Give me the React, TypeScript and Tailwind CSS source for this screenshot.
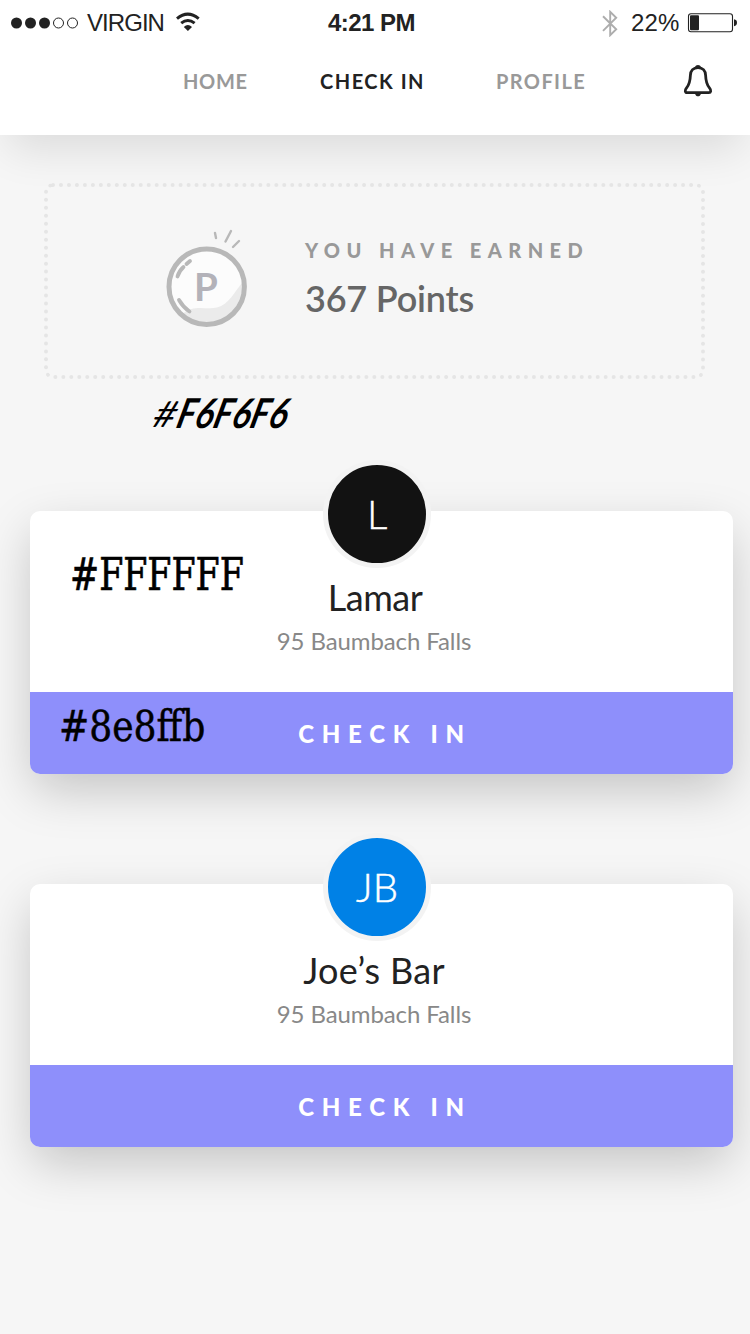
import React from "react";

function StatusBar() {
  return (
    <div className="flex h-[46px] items-center justify-between pl-[11px] pr-[13px] font-['Liberation_Sans',Arial,sans-serif] text-[#222]">
      <div className="flex w-[260px] items-center">
        <svg width="68" height="12" viewBox="0 0 68 12" className="mr-2" fill="#222">
          <circle cx="5.5" cy="6" r="5.5" />
          <circle cx="19.5" cy="6" r="5.5" />
          <circle cx="33.5" cy="6" r="5.5" />
          <g fill="none" stroke="#222" strokeWidth="1">
            <circle cx="47.5" cy="6" r="5" />
            <circle cx="61.5" cy="6" r="5" />
          </g>
        </svg>
        <span className="w-[89px] whitespace-nowrap text-[24px] leading-[46px] tracking-[-0.95px]">VIRGIN</span>
        <svg width="24" height="20" viewBox="0 0 24 20" className="-mt-[3px]" fill="none" stroke="#222" strokeWidth="3">
          <path d="M1 6.6Q11.7 -2.4 22.7 6.6" />
          <path d="M5.2 11.2Q11.8 5.7 18.6 11.2" />
          <path d="M7.8 15Q11.8 11.2 16 15L11.9 19Z" fill="#222" stroke="none" />
        </svg>
      </div>
      <span className="mr-[5px] whitespace-nowrap text-[24px] font-bold leading-[46px] tracking-[-0.5px]">4:21 PM</span>
      <div className="flex w-[260px] items-center justify-end">
        <svg width="16" height="27" viewBox="0 0 16 27" className="mr-[13px]" fill="none" stroke="#adadad" strokeWidth="1.9">
          <path d="M1 6.3L14.2 19.3L8.2 25.2V1.8L14.2 7.7L1 20.8" />
        </svg>
        <span className="w-[56px] whitespace-nowrap text-[24px] leading-[46px] tracking-[0.1px]">22%</span>
        <svg width="50" height="20" viewBox="0 0 50 20" className="-mt-[1px]">
          <rect x="1.5" y="0.7" width="44" height="18" rx="2.5" fill="none" stroke="#222" strokeWidth="1.1" />
          <rect x="3" y="2.2" width="9" height="15" rx="1" fill="#222" />
          <path d="M47 6.3Q50 6.8 50 9.7T47 13.2Z" fill="#222" />
        </svg>
      </div>
    </div>
  );
}

function Nav() {
  return (
    <nav className="flex h-[70px] items-center pl-[183px] text-[20px] font-bold text-[#999]">
      <span className="w-[137px] whitespace-nowrap tracking-[0.7px]">HOME</span>
      <span className="w-[176px] whitespace-nowrap tracking-[1.5px] text-[#222]">CHECK IN</span>
      <span className="w-[187px] whitespace-nowrap tracking-[1.4px]">PROFILE</span>
      <svg width="30" height="34" viewBox="0 0 30 34" fill="none" stroke="#222" strokeWidth="2.8" strokeLinejoin="round">
        <path d="M15 3.6C10.2 3.6 7.6 6.8 7.4 11.2C7.2 17 6.2 20.8 3.4 24.2C1.6 26.3 2 28.6 4.2 28.6H25.8C28 28.6 28.4 26.3 26.6 24.2C23.8 20.8 22.8 17 22.6 11.2C22.4 6.8 19.8 3.6 15 3.6Z" />
        <path d="M12 3.2C12.6 0.4 17.4 0.4 18 3.2ZM12 29.4C12.8 33.3 17.2 33.3 18 29.4Z" fill="#222" stroke="none" />
      </svg>
    </nav>
  );
}

function Coin() {
  return (
    <svg width="82" height="98" viewBox="0 0 82 98" fill="none" strokeLinecap="round">
      <circle cx="40.7" cy="57.7" r="37.5" fill="#fcfcfc" />
      <path d="M77 53C76 79 59 95 40.5 95C31 95 23 91 17 84.5C28 75 40 81 51 78.5C63 75.5 68 63 77 53Z" fill="#ebebeb" />
      <circle cx="40.7" cy="57.7" r="37.7" stroke="#b8b8b8" strokeWidth="5" />
      <g stroke="#b8b8b8" strokeWidth="3.8">
        <path d="M11.5 47.5Q13 42 17.5 38M20.5 35L24 32M13 71Q17 78 23.5 82.5" />
      </g>
      <g stroke="#b8b8b8" strokeWidth="2.4">
        <path d="M49 4L50 9M65 2L59.5 12.5M73 12L67 18" />
      </g>
      <text x="28" y="71.5" fill="#b3b2b9" fontSize="38.5" fontWeight="700" fontFamily="Lato, sans-serif">P</text>
    </svg>
  );
}

function Points() {
  return (
    <section className="ml-[44px] mt-[48px] flex h-[196px] w-[661px] rounded-[9px] border-4 border-dotted border-[#e5e5e5] pl-[118px] pt-[42px]">
      <Coin />
      <div className="ml-[57px] pt-[9px]">
        <p className="whitespace-nowrap text-[20px] font-black leading-[24px] tracking-[6.45px] text-[#999]">YOU HAVE EARNED</p>
        <p className="mt-[14px] whitespace-nowrap text-[36px] font-semibold leading-[44px] tracking-[-0.2px] text-[#666]">367 Points</p>
      </div>
    </section>
  );
}

type VenueProps = { initials: string; name: string; avatar: string; nameStyle: string; children?: React.ReactNode };

function Venue({ initials, name, avatar, nameStyle, children }: VenueProps) {
  return (
    <article className="relative ml-[30px] flex h-[263px] w-[703px] flex-col items-center rounded-[10px] bg-white shadow-[0_18px_50px_-3px_rgba(0,0,0,0.21)]">
      <div className={`-mt-[51px] mr-[9px] flex size-[108px] shrink-0 items-center justify-center rounded-full border-[5px] border-[#f3f3f3] text-[40px] font-light text-white [-webkit-text-stroke:0.5px_white] ${avatar}`}>
        <span className="-mt-[1px]">{initials}</span>
      </div>
      <h2 className={`mt-[7px] whitespace-nowrap text-[36px] leading-[44px] text-[#222] ${nameStyle}`}>{name}</h2>
      <p className="mr-[15px] mt-[6px] whitespace-nowrap text-[24px] leading-[32px] tracking-[-0.1px] text-[#888]">95 Baumbach Falls</p>
      <button className="mt-auto h-[82px] w-full rounded-b-[10px] bg-[#8e8ffb] pl-[7px] pt-[1px] text-[24px] font-black tracking-[7.7px] text-white">CHECK IN</button>
      {children}
    </article>
  );
}

export default function App() {
  return (
    <div className="flex h-[1334px] w-[750px] flex-col overflow-hidden bg-[#f6f6f6] font-[Lato,sans-serif]">
      <header className="h-[135px] shrink-0 bg-white shadow-[0_22px_44px_-8px_rgba(0,0,0,0.11)]">
        <StatusBar />
        <Nav />
      </header>
      <div className="relative">
        <Points />
        <span className="absolute left-[155px] top-[256px] inline-flex origin-left whitespace-nowrap text-[41px] font-bold italic leading-[44px] text-black [transform:skewX(-15deg)_scaleX(0.82)]">
          <span className="w-[29px] origin-left scale-x-[1.3] text-[36px] font-normal">#</span>
          <span className="tracking-[0.6px]">F6F6F6</span>
        </span>
      </div>
      <main className="mt-[132px] flex flex-col gap-[110px]">
        <Venue initials="L" name="Lamar" avatar="bg-[#121212]" nameStyle="mr-[13px] tracking-[-0.5px]">
          <span className="absolute left-[40px] top-[39px] origin-left scale-x-[0.79] whitespace-nowrap font-['DejaVu_Serif',serif] text-[44px] leading-[50px] text-black [-webkit-text-stroke:0.7px_black]">#FFFFFF</span>
          <span className="absolute left-[29px] top-[190px] origin-left scale-x-[0.84] whitespace-nowrap font-['DejaVu_Serif',serif] text-[43px] leading-[50px] text-black [-webkit-text-stroke:0.5px_black]">#8e8ffb</span>
        </Venue>
        <Venue initials="JB" name="Joe’s Bar" avatar="bg-[#0081e6]" nameStyle="mr-[15px] tracking-[0.3px]" />
      </main>
    </div>
  );
}
